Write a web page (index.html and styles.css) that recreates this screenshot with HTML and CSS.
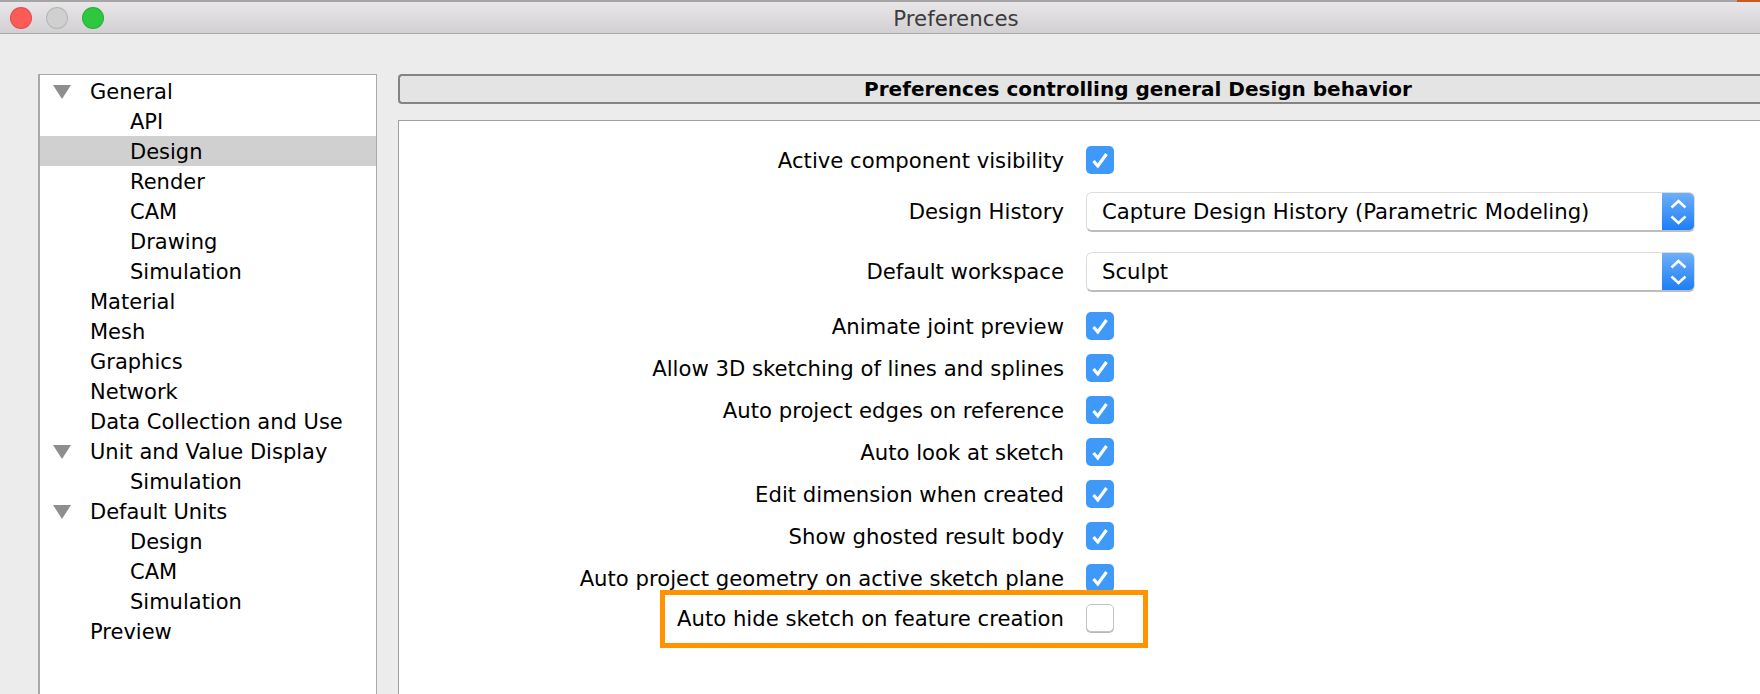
FILE: index.html
```html
<!DOCTYPE html>
<html lang="en">
<head>
<meta charset="utf-8">
<title>Preferences</title>
<link rel="stylesheet" href="styles.css">
</head>
<body>
<div class="window">
  <header class="titlebar">
    <span class="accent"></span>
    <div class="lights">
      <span class="light red"></span>
      <span class="light grey"></span>
      <span class="light green"></span>
    </div>
    <div class="title">Preferences</div>
  </header>
  <main class="main">
    <nav class="tree">
      <div class="node"><span class="arrow"></span>General</div>
      <div class="node sub">API</div>
      <div class="node sub selected">Design</div>
      <div class="node sub">Render</div>
      <div class="node sub">CAM</div>
      <div class="node sub">Drawing</div>
      <div class="node sub">Simulation</div>
      <div class="node">Material</div>
      <div class="node">Mesh</div>
      <div class="node">Graphics</div>
      <div class="node">Network</div>
      <div class="node">Data Collection and Use</div>
      <div class="node"><span class="arrow"></span>Unit and Value Display</div>
      <div class="node sub">Simulation</div>
      <div class="node"><span class="arrow"></span>Default Units</div>
      <div class="node sub">Design</div>
      <div class="node sub">CAM</div>
      <div class="node sub">Simulation</div>
      <div class="node">Preview</div>
    </nav>
    <section class="content">
      <h1 class="heading">Preferences controlling general Design behavior</h1>
      <div class="panel">
        <div class="form">
          <div class="row"><span class="label">Active component visibility</span><span class="check on"><svg viewBox="0 0 28 28"><path d="M7.500 15l4.300 5 8.700-12"/></svg></span></div>
          <div class="row select-row"><span class="label">Design History</span><div class="select"><span class="value">Capture Design History (Parametric Modeling)</span><span class="stepper"><svg viewBox="0 0 33 40"><path d="M9.500 15.500l7-6.500 7 6.500M9.500 24.500l7 6.500 7-6.500"/></svg></span></div></div>
          <div class="row select-row"><span class="label">Default workspace</span><div class="select"><span class="value">Sculpt</span><span class="stepper"><svg viewBox="0 0 33 40"><path d="M9.500 15.500l7-6.500 7 6.500M9.500 24.500l7 6.500 7-6.500"/></svg></span></div></div>
          <div class="row after-selects"><span class="label">Animate joint preview</span><span class="check on"><svg viewBox="0 0 28 28"><path d="M7.500 15l4.300 5 8.700-12"/></svg></span></div>
          <div class="row"><span class="label">Allow 3D sketching of lines and splines</span><span class="check on"><svg viewBox="0 0 28 28"><path d="M7.500 15l4.300 5 8.700-12"/></svg></span></div>
          <div class="row"><span class="label">Auto project edges on reference</span><span class="check on"><svg viewBox="0 0 28 28"><path d="M7.500 15l4.300 5 8.700-12"/></svg></span></div>
          <div class="row"><span class="label">Auto look at sketch</span><span class="check on"><svg viewBox="0 0 28 28"><path d="M7.500 15l4.300 5 8.700-12"/></svg></span></div>
          <div class="row"><span class="label">Edit dimension when created</span><span class="check on"><svg viewBox="0 0 28 28"><path d="M7.500 15l4.300 5 8.700-12"/></svg></span></div>
          <div class="row"><span class="label">Show ghosted result body</span><span class="check on"><svg viewBox="0 0 28 28"><path d="M7.500 15l4.300 5 8.700-12"/></svg></span></div>
          <div class="row"><span class="label">Auto project geometry on active sketch plane</span><span class="check on"><svg viewBox="0 0 28 28"><path d="M7.500 15l4.300 5 8.700-12"/></svg></span></div>
          <div class="row highlighted"><span class="label">Auto hide sketch on feature creation</span><span class="check"></span><span class="callout"></span></div>
        </div>
      </div>
    </section>
  </main>
</div>
</body>
</html>
```
FILE: styles.css
```css
* { box-sizing: border-box; }
html, body { margin: 0; height: 694px; overflow: hidden; }
body { background: #ececec; font-family: "DejaVu Sans", sans-serif; font-size: 21.2px; color: #000; }
.window { width: 1760px; height: 694px; display: flex; flex-direction: column; overflow: hidden; }

.titlebar { position: relative; height: 34px; flex: none; padding: 2px 0 0 152px; background: linear-gradient(#e8e6e8, #d2d0d2); border-top: 2px solid #a5a5a5; border-bottom: 1px solid #a9a9a9; display: flex; align-items: center; justify-content: center; }
.accent { position: absolute; right: 0; top: -2px; width: 23px; height: 2px; background: #c8581e; }
.lights { position: absolute; left: 10px; top: 5px; display: flex; gap: 14px; }
.light { width: 22px; height: 22px; border-radius: 50%; border: 1px solid rgba(0,0,0,.12); }
.red { background: #fc5b57; }
.grey { background: #d0d0d0; }
.green { background: #2ec840; }
.title { font-size: 21.300px; color: #3c3c3c; }

.main { flex: 1; display: flex; gap: 21px; padding: 40px 0 0 38px; min-height: 0; }
.tree { width: 339px; flex: none; background: #fff; border: 1px solid #a9a9a9; border-left-width: 2px; border-bottom: 0; padding-top: 1px; font-size: 21px; }
.node { position: relative; height: 30px; line-height: 32px; padding-left: 50px; white-space: nowrap; }
.node.sub { padding-left: 90px; }
.node.selected { background: #d0d0d0; }
.arrow { position: absolute; left: 13px; top: 9px; width: 0; height: 0; border-left: 9px solid transparent; border-right: 9px solid transparent; border-top: 14px solid #8e8e8e; }

.content { flex: 1; display: flex; flex-direction: column; gap: 16px; min-width: 0; }
.heading { margin: 0; height: 30px; flex: none; padding-left: 116px; background: #e4e4e4; border: 2px solid #848484; border-right: 0; border-radius: 4px 0 0 4px; font-size: 20px; font-weight: 700; line-height: 26px; text-align: center; }
.panel { flex: 1; background: #fff; border: 1px solid #a0a0a0; border-width: 1px 0 0 1px; padding-top: 17px; }
.form { display: flex; flex-direction: column; }

.row { position: relative; display: flex; align-items: center; height: 42px; gap: 22px; }
.row:first-child { height: 44px; }
.row.select-row { height: 60px; }
.row.after-selects { margin-top: 3px; }
.row.highlighted { height: 38px; }
.label { width: 665px; flex: none; text-align: right; white-space: nowrap; }
.select-row .label { padding-bottom: 1px; }
.check { width: 28px; height: 28px; flex: none; border-radius: 5px; background: #fff; border: 1px solid #c4c4c4; box-shadow: 0 1px 0 #b8b8b8; }
.check.on { background: #3f99f8; border: 0; box-shadow: none; }
.check svg { display: block; width: 28px; height: 28px; fill: none; stroke: #fff; stroke-width: 3.200; }

.select { width: 609px; height: 40px; flex: none; display: flex; background: #fff; border-radius: 6px; border: 1px solid #dcdcdc; border-bottom: 2px solid #bdbdbd; overflow: hidden; }
.value { flex: 1; padding-left: 15px; line-height: 37px; white-space: nowrap; }
.stepper { width: 33px; flex: none; margin: -1px -1px -2px 0; background: linear-gradient(#70b0f8, #187cf8); }
.stepper svg { display: block; width: 33px; height: 40px; fill: none; stroke: #fff; stroke-width: 2.500; }

.callout { position: absolute; left: 261px; top: -9px; width: 488px; height: 58px; border: 5px solid #ff9400; }
```
